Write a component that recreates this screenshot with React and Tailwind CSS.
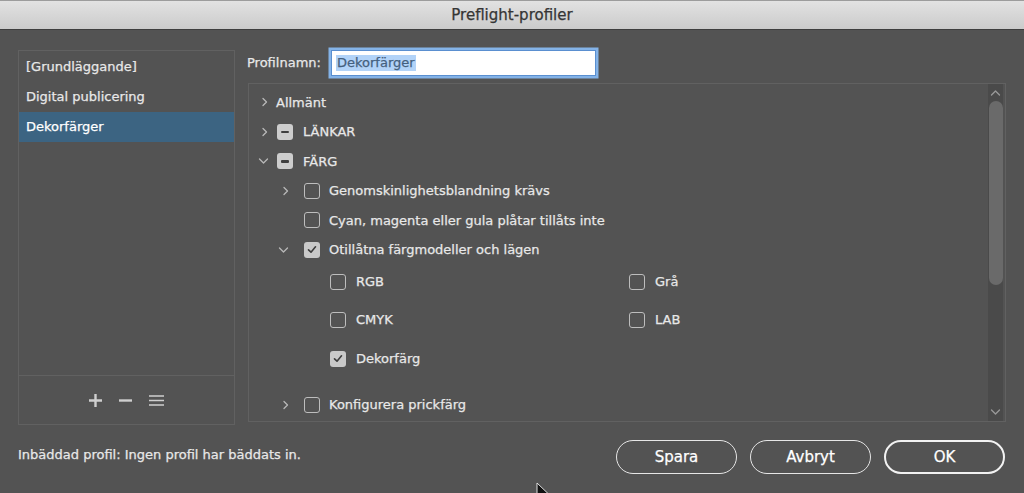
import React from "react";

const ChevR = () => (
  <svg width="8" height="10" viewBox="0 0 8 10" className="block">
    <path d="M2 1.5 L5.5 5 L2 8.5" fill="none" stroke="#b8b8b8" strokeWidth="1.3" strokeLinecap="round" strokeLinejoin="round" />
  </svg>
);
const ChevD = () => (
  <svg width="11" height="8" viewBox="0 0 11 8" className="block">
    <path d="M1.5 2 L5.5 6 L9.5 2" fill="none" stroke="#b8b8b8" strokeWidth="1.3" strokeLinecap="round" strokeLinejoin="round" />
  </svg>
);

const MinusBox = () => (
  <div className="w-[16px] h-[16px] rounded-[3px] bg-[#cdcdcd] flex items-center justify-center shrink-0">
    <div className="w-[8px] h-[2.5px] bg-[#3f3f3f] rounded-[1px]" />
  </div>
);

const Box = ({ checked }) =>
  checked ? (
    <div className="w-[16px] h-[16px] rounded-[3px] bg-[#c9c9c9] flex items-center justify-center shrink-0">
      <svg width="10" height="9" viewBox="0 0 10 9">
        <path d="M1.5 4.8 L4 7.2 L8.5 1.8" fill="none" stroke="#3d3d3d" strokeWidth="1.6" strokeLinecap="round" strokeLinejoin="round" />
      </svg>
    </div>
  ) : (
    <div className="w-[16px] h-[16px] rounded-[3px] border-[1.5px] border-[#bdbdbd] shrink-0" />
  );

export default function App() {
  return (
    <div className="w-[1024px] h-[493px] bg-[#535353] relative overflow-hidden font-['DejaVu_Sans',sans-serif] text-[#e8e8e8] text-[13px] [-webkit-text-stroke:0.25px_currentColor] flex flex-col">
      {/* Title bar */}
      <div className="h-[30px] shrink-0 bg-gradient-to-b from-[#e2e2e2] to-[#cbcbcb] border-t border-[#9c9c9c] border-b border-b-[#3e3e3e] flex items-center justify-center">
        <span className="text-[15px] text-[#353535]">Preflight-profiler</span>
      </div>

      {/* Main */}
      <div className="flex px-[18px] pt-[20px] gap-[13px]">
        {/* Left list */}
        <div className="w-[217px] h-[375px] border border-[#616161] flex flex-col shrink-0">
          <div className="flex-1 flex flex-col pt-[1px]">
            <div className="h-[30px] flex items-center pl-[7px]">[Grundläggande]</div>
            <div className="h-[30px] flex items-center pl-[7px]">Digital publicering</div>
            <div className="h-[30px] flex items-center pl-[7px] bg-[#3c6482] text-white">Dekorfärger</div>
          </div>
          <div className="h-[49px] border-t border-[#616161] flex items-center justify-center gap-[15px] [-webkit-text-stroke:0]">
            <svg width="15" height="15" viewBox="0 0 15 15">
              <path d="M7.5 1 V14 M1 7.5 H14" stroke="#cfcfcf" strokeWidth="2.4" />
            </svg>
            <svg width="15" height="15" viewBox="0 0 15 15">
              <path d="M1 7.5 H14" stroke="#cfcfcf" strokeWidth="2.4" />
            </svg>
            <svg width="17" height="13" viewBox="0 0 17 13">
              <path d="M1 2 H16 M1 6.5 H16 M1 11 H16" stroke="#cfcfcf" strokeWidth="1.4" />
            </svg>
          </div>
        </div>

        {/* Right */}
        <div className="flex-1 flex flex-col">
          <div className="h-[27px] flex items-center -mt-[1px]">
            <span className="ml-[-1px] w-[84px]">Profilnamn:</span>
            <div className="w-[265px] h-[26px] bg-white border border-[#5a8fd0] ring-[2.5px] ring-[#84b3e8] flex items-center pl-[4px]">
              <span className="bg-[#b2d3f8] text-[#44607e] text-[13px] px-[1px] leading-[16px]">Dekorfärger</span>
            </div>
          </div>

          <div className="mt-[7px] h-[339px] border border-[#616161] flex">
            {/* Tree content */}
            <div className="flex-1 flex flex-col pt-[3.5px]">
              <div className="h-[29.5px] flex items-center pl-[12px]">
                <div className="w-[15px]"><ChevR /></div>
                <span>Allmänt</span>
              </div>
              <div className="h-[29.5px] flex items-center pl-[12px]">
                <div className="w-[16px]"><ChevR /></div>
                <MinusBox />
                <span className="ml-[10px]">LÄNKAR</span>
              </div>
              <div className="h-[29.5px] flex items-center pl-[9px]">
                <div className="w-[19px]"><ChevD /></div>
                <MinusBox />
                <span className="ml-[10px]">FÄRG</span>
              </div>
              <div className="h-[29.5px] flex items-center pl-[33px]">
                <div className="w-[22px]"><ChevR /></div>
                <Box />
                <span className="ml-[9px]">Genomskinlighetsblandning krävs</span>
              </div>
              <div className="h-[29.5px] flex items-center pl-[55px]">
                <Box />
                <span className="ml-[9px]">Cyan, magenta eller gula plåtar tillåts inte</span>
              </div>
              <div className="h-[29.5px] flex items-center pl-[29px]">
                <div className="w-[26px]"><ChevD /></div>
                <Box checked />
                <span className="ml-[9px]">Otillåtna färgmodeller och lägen</span>
              </div>
              <div className="grid grid-cols-[299px_1fr] gap-y-[8.5px] pt-[2px] pl-[81px]">
                <div className="h-[30px] flex items-center">
                  <Box />
                  <span className="ml-[10px]">RGB</span>
                </div>
                <div className="h-[30px] flex items-center">
                  <Box />
                  <span className="ml-[10px]">Grå</span>
                </div>
                <div className="h-[30px] flex items-center">
                  <Box />
                  <span className="ml-[10px]">CMYK</span>
                </div>
                <div className="h-[30px] flex items-center">
                  <Box />
                  <span className="ml-[10px]">LAB</span>
                </div>
                <div className="h-[30px] flex items-center">
                  <Box checked />
                  <span className="ml-[10px]">Dekorfärg</span>
                </div>
              </div>
              <div className="mt-[16px] h-[30px] flex items-center pl-[33px]">
                <div className="w-[22px]"><ChevR /></div>
                <Box />
                <span className="ml-[9px]">Konfigurera prickfärg</span>
              </div>
            </div>

            {/* Scrollbar */}
            <div className="w-[15px] mr-[2px] bg-[#4a4a4a] flex flex-col items-center">
              <svg width="11" height="8" viewBox="0 0 11 8" className="mt-[5px]">
                <path d="M1.5 6 L5.5 2 L9.5 6" fill="none" stroke="#9a9a9a" strokeWidth="1.3" strokeLinecap="round" strokeLinejoin="round" />
              </svg>
              <div className="mt-[4px] w-[14px] h-[184px] rounded-t-[7px] rounded-b-[7px] bg-[#6a6a6a]" />
              <div className="flex-1" />
              <svg width="11" height="8" viewBox="0 0 11 8" className="mb-[5px]">
                <path d="M1.5 2 L5.5 6 L9.5 2" fill="none" stroke="#9a9a9a" strokeWidth="1.3" strokeLinecap="round" strokeLinejoin="round" />
              </svg>
            </div>
          </div>
        </div>
      </div>

      {/* Bottom */}
      <div className="flex items-center px-[18px] mt-[15px]">
        <span className="flex-1 text-[13px] mb-[5px]">Inbäddad profil: Ingen profil har bäddats in.</span>
        <div className="flex gap-[13px] mr-[1px]">
          <button className="w-[121px] h-[34px] rounded-full border-[1.5px] border-[#e6e6e6] text-[15px] text-white">Spara</button>
          <button className="w-[121px] h-[34px] rounded-full border-[1.5px] border-[#e6e6e6] text-[15px] text-white">Avbryt</button>
          <button className="w-[121px] h-[34px] rounded-full border-[2.5px] border-[#f2f2f2] text-[15px] text-white">OK</button>
        </div>
      </div>

      {/* Mouse cursor */}
      <svg width="14" height="20" viewBox="0 0 14 20" className="absolute left-[536px] top-[482px]">
        <path d="M1 1 L1 16 L4.5 12.5 L7 18 L9.5 17 L7 11.5 L12 11.5 Z" fill="#111" stroke="#ddd" strokeWidth="1" />
      </svg>
    </div>
  );
}
